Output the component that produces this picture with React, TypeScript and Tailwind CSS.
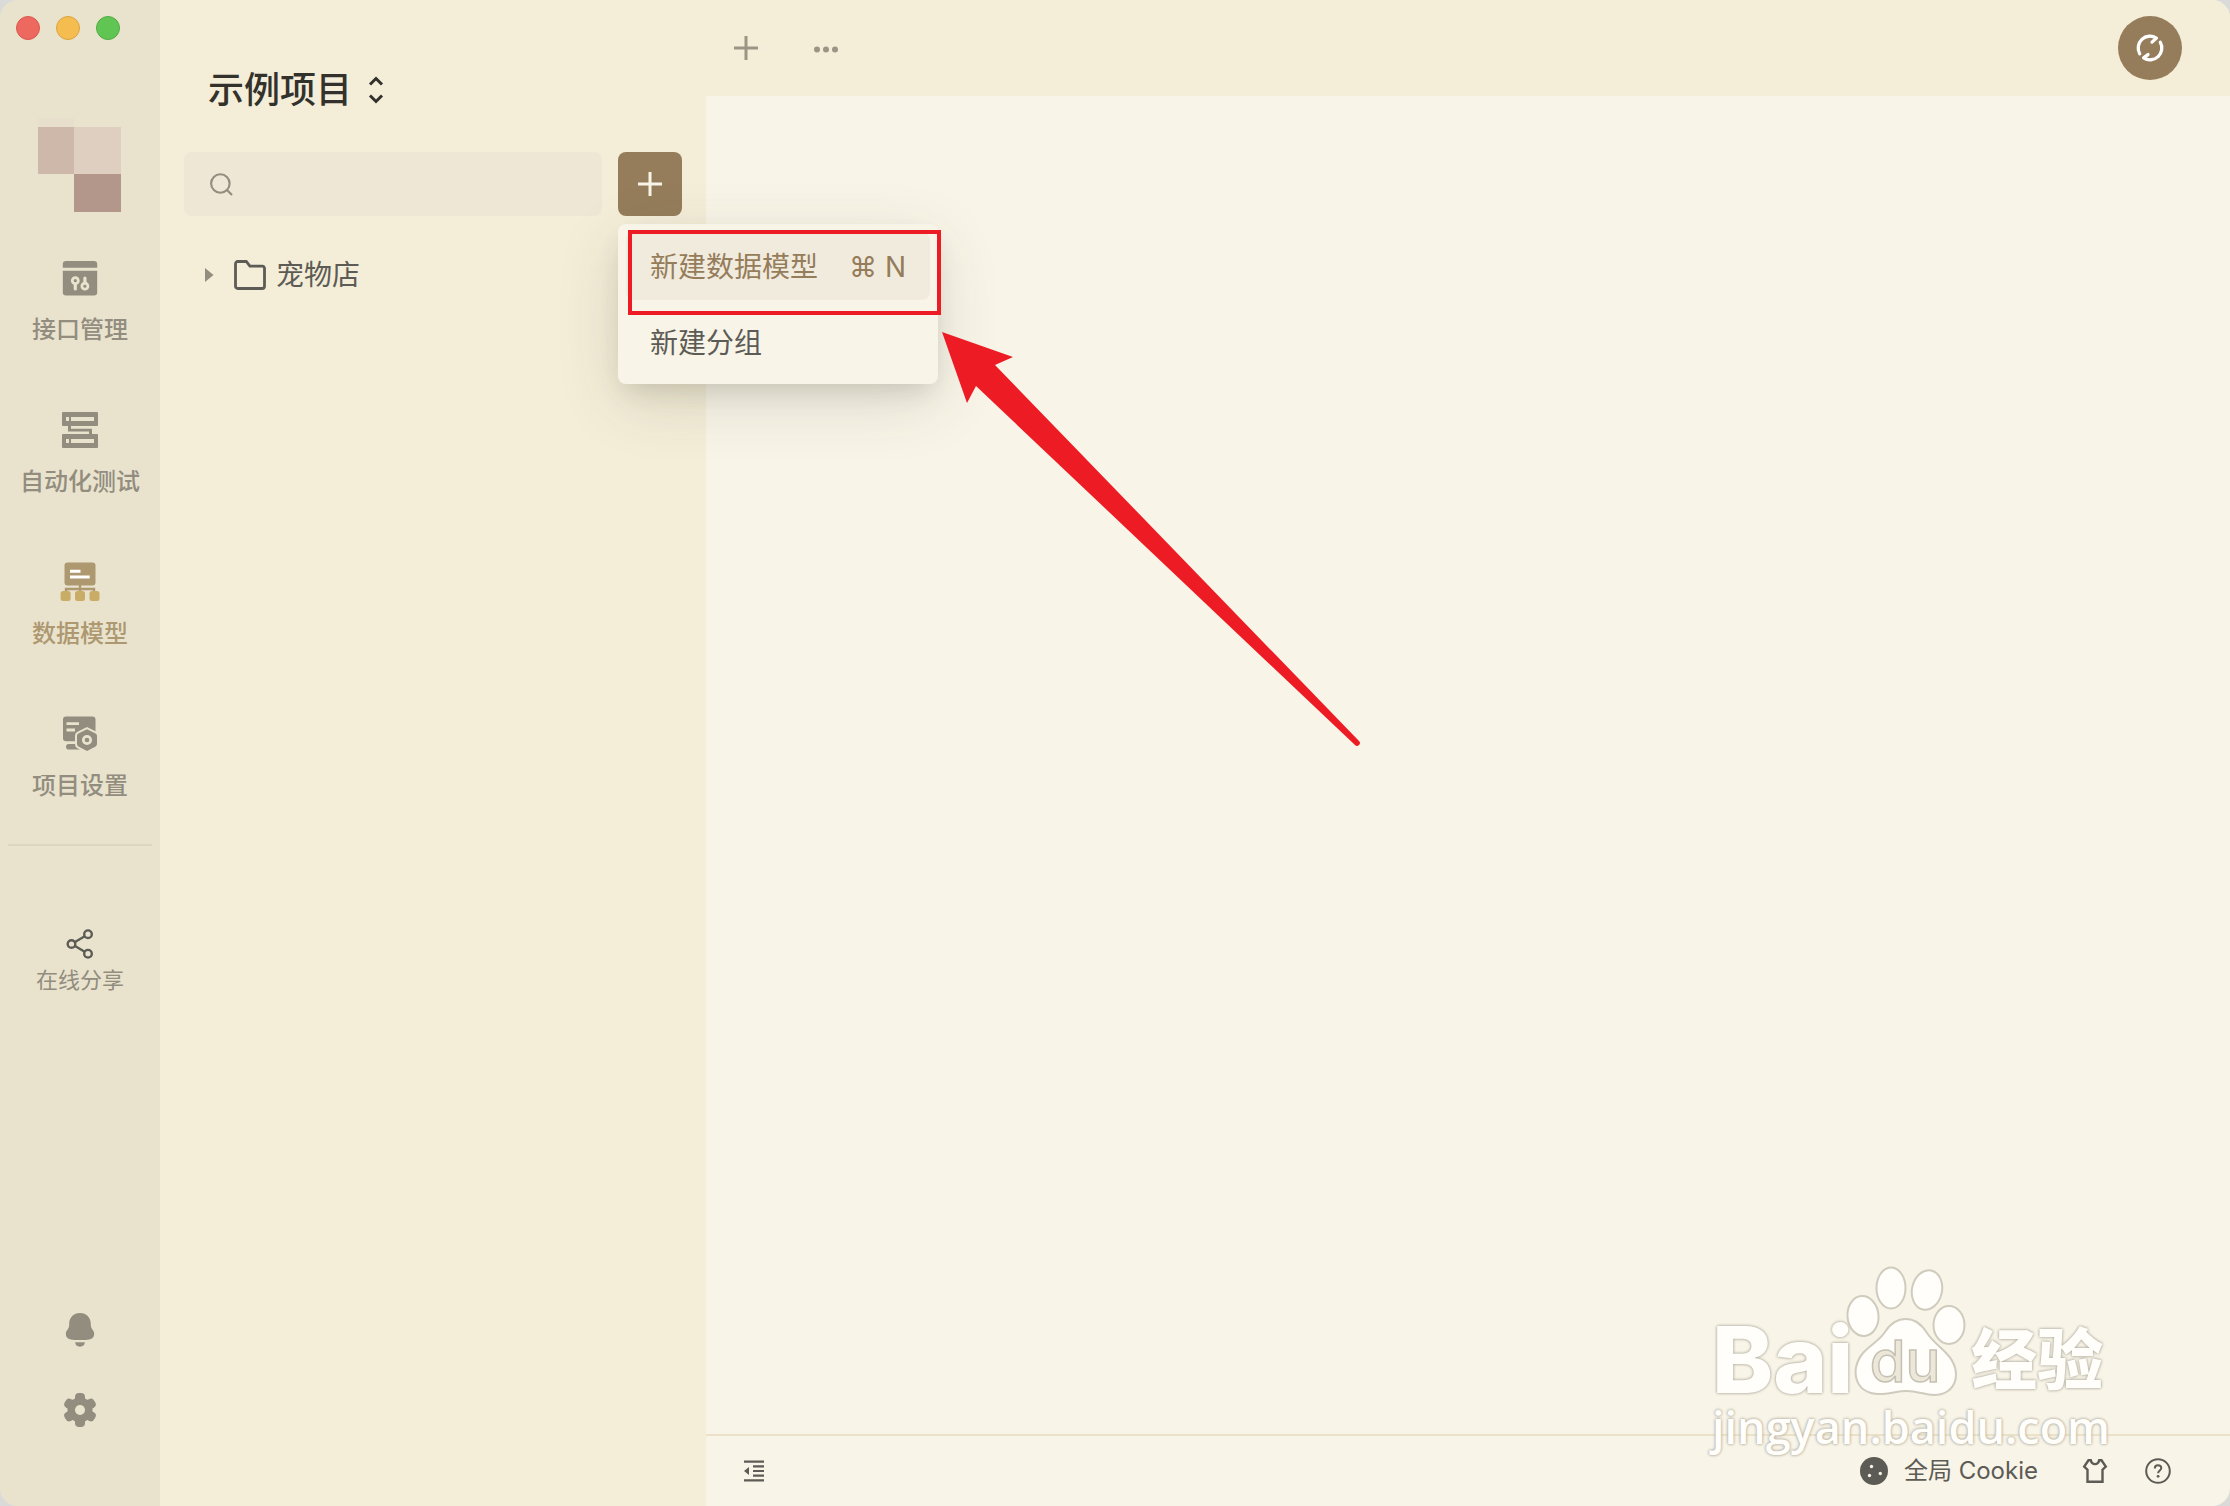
import { useState, type ReactNode } from "react";

const INK = "#5c5b55";

function ApiIcon() {
  return (
    <svg width="36" height="36" viewBox="0 0 36 36" fill="currentColor">
      <path d="M.8 7.800V4.200a3.200 3.200 0 0 1 3.200-3.200h28a3.200 3.200 0 0 1 3.200 3.200v3.600z" />
      <path d="M.8 10.700h34.400v21.600a3.200 3.200 0 0 1-3.200 3.200H4a3.200 3.200 0 0 1-3.200-3.200z" />
      <g stroke="#e9e3ce" fill="none" strokeLinecap="round">
        <circle cx="13.300" cy="20.700" r="3" strokeWidth="2.800" />
        <path d="M13.300 24v5" strokeWidth="3.200" />
        <circle cx="22.900" cy="26.200" r="3" strokeWidth="2.800" />
        <path d="M22.900 23v-5" strokeWidth="3.200" />
      </g>
    </svg>
  );
}

function TestIcon() {
  return (
    <svg width="36" height="36" viewBox="0 0 36 36" fill="currentColor" fillRule="evenodd">
      <path d="M.7 0h34.600l.7.7v12.600l-.7.7H.7l-.7-.7V.7zM4 5v4h3V5zM9 5v4h23V5z" />
      <path d="M.7 22h34.600l.7.7v12.600l-.7.7H.7l-.7-.7V22.700zM4 27v4h3v-4zM9 27v4h23v-4z" />
      <path d="M6 14h3v2.700h21V22h-3v-2.500H6z" />
    </svg>
  );
}

function ModelIcon() {
  return (
    <svg width="40" height="40" viewBox="0 0 40 40" fill="none">
      <rect x="4.500" y=".5" width="31" height="23" rx="3" fill="#ad9870" />
      <path d="M10 9.300h10.500M10 15h19.700" stroke="#fff" strokeWidth="3" />
      <path d="M20 23v7M6 30v-3h28v3" stroke="#ad9870" strokeWidth="2.400" />
      <g fill="#c9ac66">
        <rect x=".6" y="29" width="10" height="10" rx="2.500" />
        <rect x="15" y="29" width="10" height="10" rx="2.500" />
        <rect x="29.500" y="29" width="10" height="10" rx="2.500" />
      </g>
    </svg>
  );
}

function SettingsIcon() {
  return (
    <svg width="36" height="36" viewBox="0 0 36 36" fill="currentColor">
      <rect x="1" y=".5" width="32.500" height="24.800" rx="3" />
      <rect x="4" y="28" width="16" height="5.600" rx="2.800" />
      <path d="M4.500 7.700H17M4.500 14H13" stroke="#e9e3ce" strokeWidth="2.800" />
      <path
        d="M25 13.200l8.600 4.400a2.500 2.500 0 0 1 1.400 2.300v8.200a2.500 2.500 0 0 1-1.400 2.300L25 35l-8.600-4.600a2.500 2.500 0 0 1-1.400-2.300v-8.200a2.500 2.500 0 0 1 1.400-2.300z"
        stroke="#e9e3ce"
        strokeWidth="4"
        paintOrder="stroke"
      />
      <circle cx="25" cy="24" r="3.700" fill="none" stroke="#e9e3ce" strokeWidth="2.700" />
    </svg>
  );
}

function ShareIcon() {
  return (
    <svg width="28" height="32" viewBox="0 0 28 32" fill="none" stroke={INK} strokeWidth="2.400">
      <circle cx="5.500" cy="16" r="3.800" />
      <circle cx="22" cy="6.200" r="3.800" />
      <circle cx="22" cy="25.700" r="3.800" />
      <path d="M9 14l9.700-5.800M9 18l9.700 5.700" />
    </svg>
  );
}

function BellIcon() {
  return (
    <svg width="30" height="36" viewBox="0 0 30 36" fill="currentColor">
      <path d="M15 1C8.600 1 4.200 5.600 4.200 11.800c0 2.600-.2 3.800-1.400 5.500C1.500 19 .8 19.800.8 21.700c0 3.400 2 5.200 4.800 5.800 3.600.7 15.200.7 18.800 0 2.800-.6 4.800-2.400 4.800-5.800 0-1.900-.7-2.700-2-4.400-1.200-1.700-1.400-2.900-1.400-5.500C25.800 5.600 21.400 1 15 1z" />
      <path d="M10.200 30.300h9.600c0 2.600-1.800 4.400-4.800 4.400s-4.800-1.800-4.800-4.400z" />
    </svg>
  );
}

function GearIcon() {
  return (
    <svg width="36" height="36" viewBox="0 0 36 36" fill="currentColor">
      <circle cx="18" cy="18" r="12.500" />
      <rect x="13" y="1" width="10" height="34" rx="4" />
      <rect x="13" y="1" width="10" height="34" rx="4" transform="rotate(60 18 18)" />
      <rect x="13" y="1" width="10" height="34" rx="4" transform="rotate(120 18 18)" />
      <circle cx="18" cy="18" r="5" fill="#e9e3ce" />
    </svg>
  );
}

function PlusIcon() {
  return (
    <svg width="24" height="24" viewBox="0 0 24 24" stroke="currentColor" strokeWidth="3">
      <path d="M12 0v24M0 12h24" />
    </svg>
  );
}

interface NavItem {
  label: string;
  icon: ReactNode;
}

const NAV: NavItem[] = [
  { label: "接口管理", icon: <ApiIcon /> },
  { label: "自动化测试", icon: <TestIcon /> },
  { label: "数据模型", icon: <ModelIcon /> },
  { label: "项目设置", icon: <SettingsIcon /> },
];

function Rail() {
  const [active, setActive] = useState("数据模型");

  return (
    <div className="flex w-40 shrink-0 flex-col items-center bg-[#e9e3ce] pb-[76px] text-[#928d7f]">
      <div className="flex gap-4 self-start px-4 pt-4">
        <button aria-label="关闭" className="size-6 rounded-full border border-[#d9584e] bg-[#ed695f]" />
        <button aria-label="最小化" className="size-6 rounded-full border border-[#d9a33f] bg-[#f5bd4f]" />
        <button aria-label="缩放" className="size-6 rounded-full border border-[#52ab43] bg-[#61c554]" />
      </div>

      {/* avatar */}
      <div className="mt-[78px] grid w-[84px] grid-cols-[36px_47px] grid-rows-[9px_47px_38px]">
        <div className="bg-[#e7dfcb]" />
        <div />
        <div className="bg-[#ceb8aa]" />
        <div className="bg-[#dfcfc1]" />
        <div />
        <div className="bg-[#b4978b]" />
      </div>

      <nav className="mt-[46px] flex flex-col items-center gap-16">
        {NAV.map((item) => (
          <button
            key={item.label}
            onClick={() => setActive(item.label)}
            className={`flex flex-col items-center gap-4 text-2xl font-medium ${
              active === item.label ? "text-[#ad9870]" : ""
            }`}
          >
            <span className="flex h-10 items-center">{item.icon}</span>
            <span>{item.label}</span>
          </button>
        ))}
      </nav>

      <hr className="mt-[42px] w-36 border-t-2 border-[#ddd6c2]" />

      <button className="mt-20 flex flex-col items-center text-[22px] leading-9">
        <span className="flex h-9 items-center">
          <ShareIcon />
        </span>
        在线分享
      </button>

      <div className="mt-auto flex flex-col gap-10">
        <button aria-label="通知" className="flex size-10 items-center justify-center">
          <BellIcon />
        </button>
        <button aria-label="设置" className="flex size-10 items-center justify-center">
          <GearIcon />
        </button>
      </div>
    </div>
  );
}

function CreateMenu() {
  return (
    <div className="absolute top-[72px] left-0 flex w-80 flex-col gap-2 rounded-lg bg-[#f8f4e7] p-2 text-[28px] shadow-[0_12px_24px_-8px_rgba(60,60,40,0.18),0_18px_64px_rgba(60,60,40,0.14)]">
      <button className="flex h-[68px] items-center justify-between rounded-lg bg-[#f1ebdd] px-6 pt-0.5 text-[#957d5b]">
        新建数据模型
        <span>⌘ N</span>
      </button>
      <button className="flex h-[68px] items-center rounded-lg px-6 pt-0.5 text-[#5c5b55]">新建分组</button>

      {/* callout */}
      <div className="pointer-events-none absolute top-[6px] left-[10px] h-[85px] w-[313px] border-4 border-[#ed1c24]" />
      <svg
        className="pointer-events-none absolute top-[104px] left-full"
        width="424"
        height="422"
        viewBox="0 0 424 422"
        fill="#ed1c24"
      >
        <path d="M4 4l71 25-18 8 364 376a2.500 2.500 0 0 1-4 4L38 58l-9 17z" />
      </svg>
    </div>
  );
}

function Sidebar() {
  const [query, setQuery] = useState("");

  return (
    <aside className="relative z-10 w-[546px] shrink-0 bg-[#f4edd8] pt-[66px] pr-6 pl-6">
      <button className="ml-6 flex h-12 items-center gap-4 text-4xl font-medium text-[#33312c]">
        示例项目
        <svg width="16" height="28" viewBox="0 0 16 28" fill="none" stroke="currentColor" strokeWidth="3">
          <path d="M2 8.500l6-6 6 6M2 19.500l6 6 6-6" />
        </svg>
      </button>

      <div className="mt-[38px] flex gap-4">
        <label className="flex h-16 flex-1 items-center gap-4 rounded-lg bg-[#eee7d6] px-6 text-[#928d7f]">
          <svg width="28" height="28" viewBox="0 0 28 28" fill="none" stroke="currentColor" strokeWidth="2.400">
            <circle cx="13.900" cy="13.500" r="10.400" />
            <path d="M21 20.500l6 6" />
          </svg>
          <input
            type="text"
            aria-label="搜索"
            value={query}
            onChange={(e) => setQuery(e.target.value)}
            className="w-full min-w-0 bg-transparent text-[28px] text-[#5c5b55] outline-none"
          />
        </label>
        <div className="relative">
          <button
            aria-label="新建"
            className="flex size-16 items-center justify-center rounded-lg bg-[#957d5b] text-[#f8f4e7]"
          >
            <PlusIcon />
          </button>
          <CreateMenu />
        </div>
      </div>

      <button className="mt-[38px] ml-5 flex h-10 items-center pt-0.5 text-[28px] text-[#5c5b55]">
        <svg className="mr-5" width="10" height="16" viewBox="0 0 10 16" fill="#928d7f">
          <path d="M1 1l8.500 7L1 15z" />
        </svg>
        <svg className="mr-2.5" width="32" height="30" viewBox="0 0 32 30" fill="none" stroke="currentColor" strokeWidth="2.800">
          <path d="M3.700 1.500h8.600l3.600 4.600h12.400a2.200 2.200 0 0 1 2.200 2.200v18a2.200 2.200 0 0 1-2.200 2.200H3.700a2.200 2.200 0 0 1-2.200-2.200V3.700a2.200 2.200 0 0 1 2.200-2.200z" />
        </svg>
        宠物店
      </button>
    </aside>
  );
}

function Footer() {
  return (
    <footer className="flex h-[72px] items-center border-t-2 border-[#ebe2c8] pr-[58px] pl-9 text-2xl text-[#5c5b55]">
      <button aria-label="收起侧栏">
        <svg width="24" height="24" viewBox="0 0 24 24" fill="none" stroke="currentColor" strokeWidth="2.200">
          <path d="M2 2.700h20M11 7.300h11M11 12h11M11 16.600h11M2 21.300h20" />
          <path d="M7 8v8l-5-4z" fill="currentColor" stroke="none" />
        </svg>
      </button>
      <button className="ml-auto flex items-center gap-4">
        <svg width="28" height="28" viewBox="0 0 28 28" fill="currentColor">
          <circle cx="14" cy="14" r="14" />
          <g fill="#f8f4e7">
            <circle cx="11.500" cy="9.500" r="1.700" />
            <circle cx="9.500" cy="18.500" r="1.700" />
            <circle cx="20.300" cy="16.500" r="1.700" />
          </g>
        </svg>
        全局 Cookie
      </button>
      <button aria-label="主题" className="ml-11">
        <svg width="26" height="26" viewBox="0 0 26 26" fill="none" stroke="currentColor" strokeWidth="2.400">
          <path d="M6.500 2.200h2.300c.6 2.600 2 3.900 4.200 3.900s3.600-1.300 4.200-3.900h2.300l4.300 6.300-3.300 3.200v12.100h-15V11.700L2.200 8.500z" />
        </svg>
      </button>
      <button aria-label="帮助" className="ml-9">
        <svg width="28" height="28" viewBox="0 0 28 28" fill="none" stroke="currentColor" strokeWidth="2">
          <circle cx="14" cy="14" r="11.800" />
          <path d="M10.800 11.400c0-2 1.300-3.200 3.200-3.200s3.300 1.200 3.300 2.900c0 2.400-3.200 2.500-3.200 5.200" />
          <circle cx="14.100" cy="19.300" r="1.400" fill="currentColor" stroke="none" />
        </svg>
      </button>
    </footer>
  );
}

function Watermark() {
  return (
    <div className="pointer-events-none absolute right-[118px] bottom-[58px] w-[400px] text-[#fffefb] [text-shadow:0_0_3px_#b5b1a4,0_0_3px_#b5b1a4]">
      <div className="flex items-end">
        <span className="text-[92px] leading-[92px] font-extrabold">Bai</span>
        <svg width="118" height="150" viewBox="0 0 118 150" className="-mb-2.5 -ml-2 overflow-visible">
          <g fill="#fffefb" stroke="#cfcbbd" strokeWidth="2">
            <ellipse cx="18" cy="50" rx="15.500" ry="20" transform="rotate(-5 18 50)" />
            <ellipse cx="46" cy="22" rx="14.500" ry="20.500" />
            <ellipse cx="82" cy="24" rx="15" ry="20" transform="rotate(12 82 24)" />
            <ellipse cx="104" cy="59" rx="15.500" ry="19" />
            <path d="M61 53c10 0 16 6 21 14 6 9 13 13 20 21 16 17 10 41-13 41-9 0-17-4-27-4s-17 3-28 3c-24 0-30-24-16-41 7-8 16-12 22-21 5-8 11-13 21-13z" />
          </g>
          <text
            x="60"
            y="116"
            textAnchor="middle"
            fill="#ece7d9"
            stroke="#c5c1b2"
            strokeWidth="1.500"
            className="text-[58px] font-medium [text-shadow:none]"
          >
            du
          </text>
        </svg>
        <span className="ml-2 text-[66px] leading-[92px] font-black">经验</span>
      </div>
      <div className="font-['Open_Sans'] text-[45px] leading-[42px] font-semibold">jingyan.baidu.com</div>
    </div>
  );
}

export default function App() {
  return (
    <div className="bg-[#dadad8] font-['Inter','Noto_Sans_CJK_SC',sans-serif]">
      <div className="flex min-h-screen overflow-hidden rounded-[18px]">
        <Rail />
        <Sidebar />
        <main className="relative flex min-w-0 flex-1 flex-col bg-[#f8f4e7]">
          <header className="flex h-24 items-center bg-[#f4edd8] pr-12 pl-7 text-[#9b9586]">
            <button aria-label="新标签页">
              <PlusIcon />
            </button>
            <button aria-label="更多" className="ml-14">
              <svg width="24" height="24" viewBox="0 0 24 24" fill="currentColor">
                <circle cx="3" cy="13.500" r="3" />
                <circle cx="12" cy="13.500" r="3" />
                <circle cx="21" cy="13.500" r="3" />
              </svg>
            </button>
            <button
              aria-label="同步"
              className="ml-auto flex size-16 items-center justify-center rounded-full bg-[#957d5b] text-white"
            >
              <svg
                width="32"
                height="32"
                viewBox="-16 -16 32 32"
                fill="none"
                stroke="currentColor"
                strokeWidth="3.300"
                strokeLinecap="round"
                strokeLinejoin="round"
              >
                <path d="M-10.300 5.800A11.800 11.800 0 0 1 6.400-9.900L2-5.900" />
                <path d="M10.300-5.800A11.800 11.800 0 0 1-6.400 9.900L-2 6.600" />
              </svg>
            </button>
          </header>
          <div className="flex-1" />
          <Footer />
          <Watermark />
        </main>
      </div>
    </div>
  );
}
